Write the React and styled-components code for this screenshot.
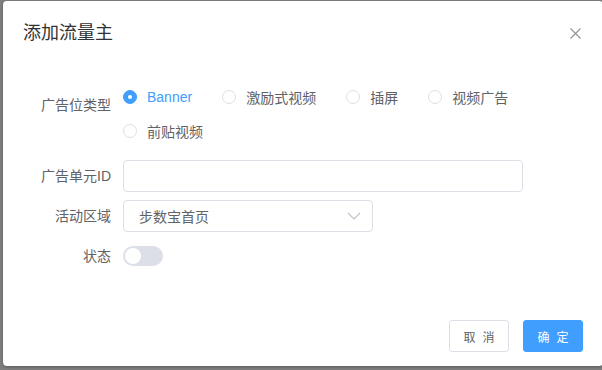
import React, { useState } from 'react'
import styled, { createGlobalStyle } from 'styled-components'

const GlobalStyle = createGlobalStyle`
    html, body {
        margin: 0;
        padding: 0;
        background: #7f7f7f;
        overflow: hidden;
        font-family: "Liberation Sans", "Noto Sans CJK SC", sans-serif;
    }
`

const Overlay = styled.div`
    width: 602px;
    height: 370px;
    padding: 1px 0 0 3px;
    box-sizing: border-box;
    overflow: hidden;
`

const Dialog = styled.div`
    width: 600px;
    height: 365px;
    background: #fff;
    border-radius: 4px;
    box-shadow: 0 1px 3px rgba(0, 0, 0, .3);
    display: flex;
    flex-direction: column;
`

const Header = styled.div`
    padding: 20px 20px 10px;
    display: flex;
    justify-content: space-between;
    align-items: center;
`

const Title = styled.span`
    font-size: 18px;
    line-height: 24px;
    color: #303133;
`

const Close = styled.button`
    border: 0;
    background: none;
    padding: 0;
    width: 16px;
    height: 16px;
    display: flex;
    align-items: center;
    justify-content: center;
    cursor: pointer;
`

const Body = styled.div`
    padding: 30px 20px;
    flex: 1;
`

const FormItem = styled.div`
    display: flex;
    align-items: ${props => props.top ? 'flex-start' : 'center'};
    margin-bottom: ${props => props.gap || 8}px;
`

const Label = styled.label`
    width: 100px;
    box-sizing: border-box;
    padding-right: 12px;
    text-align: right;
    font-size: 14px;
    color: #606266;
    line-height: ${props => props.tall ? 40 : 32}px;
`

const RadioGroup = styled.div`
    display: flex;
    flex-wrap: wrap;
    width: 460px;
    row-gap: 14px;
    padding-top: 2px;
`

const Radio = styled.label`
    display: flex;
    align-items: center;
    height: 20px;
    margin-right: 30px;
    font-size: 14px;
    color: ${props => props.checked ? '#409eff' : '#606266'};
    cursor: pointer;
`

const Dot = styled.span`
    width: 14px;
    height: 14px;
    box-sizing: border-box;
    border-radius: 50%;
    border: 1px solid ${props => props.checked ? '#409eff' : '#dcdfe6'};
    background: ${props => props.checked ? '#409eff' : '#fff'};
    margin-right: 10px;
    display: flex;
    align-items: center;
    justify-content: center;

    &::after {
        content: '';
        width: 4px;
        height: 4px;
        border-radius: 50%;
        background: #fff;
        display: ${props => props.checked ? 'block' : 'none'};
    }
`

const Input = styled.input`
    width: ${props => props.width}px;
    height: 32px;
    box-sizing: border-box;
    border: 1px solid #dcdfe6;
    border-radius: 4px;
    padding: 0 15px;
    font-size: 14px;
    font-family: inherit;
    color: #606266;
    outline: none;
`

const Select = styled.div`
    width: 250px;
    height: 32px;
    box-sizing: border-box;
    border: 1px solid #dcdfe6;
    border-radius: 4px;
    padding: 0 11px 0 15px;
    display: flex;
    align-items: center;
    justify-content: space-between;
    font-size: 14px;
    color: #606266;
`

const Switch = styled.span`
    width: 40px;
    height: 20px;
    border-radius: 10px;
    background: ${props => props.on ? '#409eff' : '#dcdfe6'};
    display: flex;
    align-items: center;
    padding: 0 2px;
    box-sizing: border-box;
    justify-content: ${props => props.on ? 'flex-end' : 'flex-start'};
    cursor: pointer;

    &::after {
        content: '';
        width: 16px;
        height: 16px;
        border-radius: 50%;
        background: #fff;
    }
`

const Footer = styled.div`
    padding: 10px 20px 20px;
    display: flex;
    justify-content: flex-end;
    gap: 14px;
`

const Button = styled.button`
    height: 32px;
    width: 60px;
    border-radius: 3px;
    font-size: 12px;
    font-family: inherit;
    border: 1px solid ${props => props.primary ? '#409eff' : '#dcdfe6'};
    background: ${props => props.primary ? '#409eff' : '#fff'};
    color: ${props => props.primary ? '#fff' : '#606266'};
    letter-spacing: 7px;
    padding: 0 0 0 7px;
    cursor: pointer;
`

const types = ['Banner', '激励式视频', '插屏', '视频广告', '前贴视频']

export default function App() {
    const [type, setType] = useState('Banner')
    const [on, setOn] = useState(false)

    return (
        <Overlay>
            <GlobalStyle />
            <Dialog>
                <Header>
                    <Title>添加流量主</Title>
                    <Close>
                        <svg width="11" height="11" viewBox="0 0 11 11">
                            <path d="M0.5 0.5 L10.5 10.5 M10.5 0.5 L0.5 10.5" stroke="#909399" strokeWidth="1.1" />
                        </svg>
                    </Close>
                </Header>

                <Body>
                    <FormItem top gap={19}>
                        <Label tall>广告位类型</Label>
                        <RadioGroup>
                            {types.map(t => (
                                <Radio key={t} checked={t === type} onClick={() => setType(t)}>
                                    <Dot checked={t === type} />
                                    {t}
                                </Radio>
                            ))}
                        </RadioGroup>
                    </FormItem>

                    <FormItem>
                        <Label>广告单元ID</Label>
                        <Input width={400} />
                    </FormItem>

                    <FormItem>
                        <Label>活动区域</Label>
                        <Select>
                            步数宝首页
                            <svg width="14" height="8" viewBox="0 0 14 8">
                                <path d="M1 1 L7 7 L13 1" fill="none" stroke="#c0c4cc" strokeWidth="1.2" />
                            </svg>
                        </Select>
                    </FormItem>

                    <FormItem>
                        <Label>状态</Label>
                        <Switch on={on} onClick={() => setOn(!on)} />
                    </FormItem>
                </Body>

                <Footer>
                    <Button>取消</Button>
                    <Button primary>确定</Button>
                </Footer>
            </Dialog>
        </Overlay>
    )
}
